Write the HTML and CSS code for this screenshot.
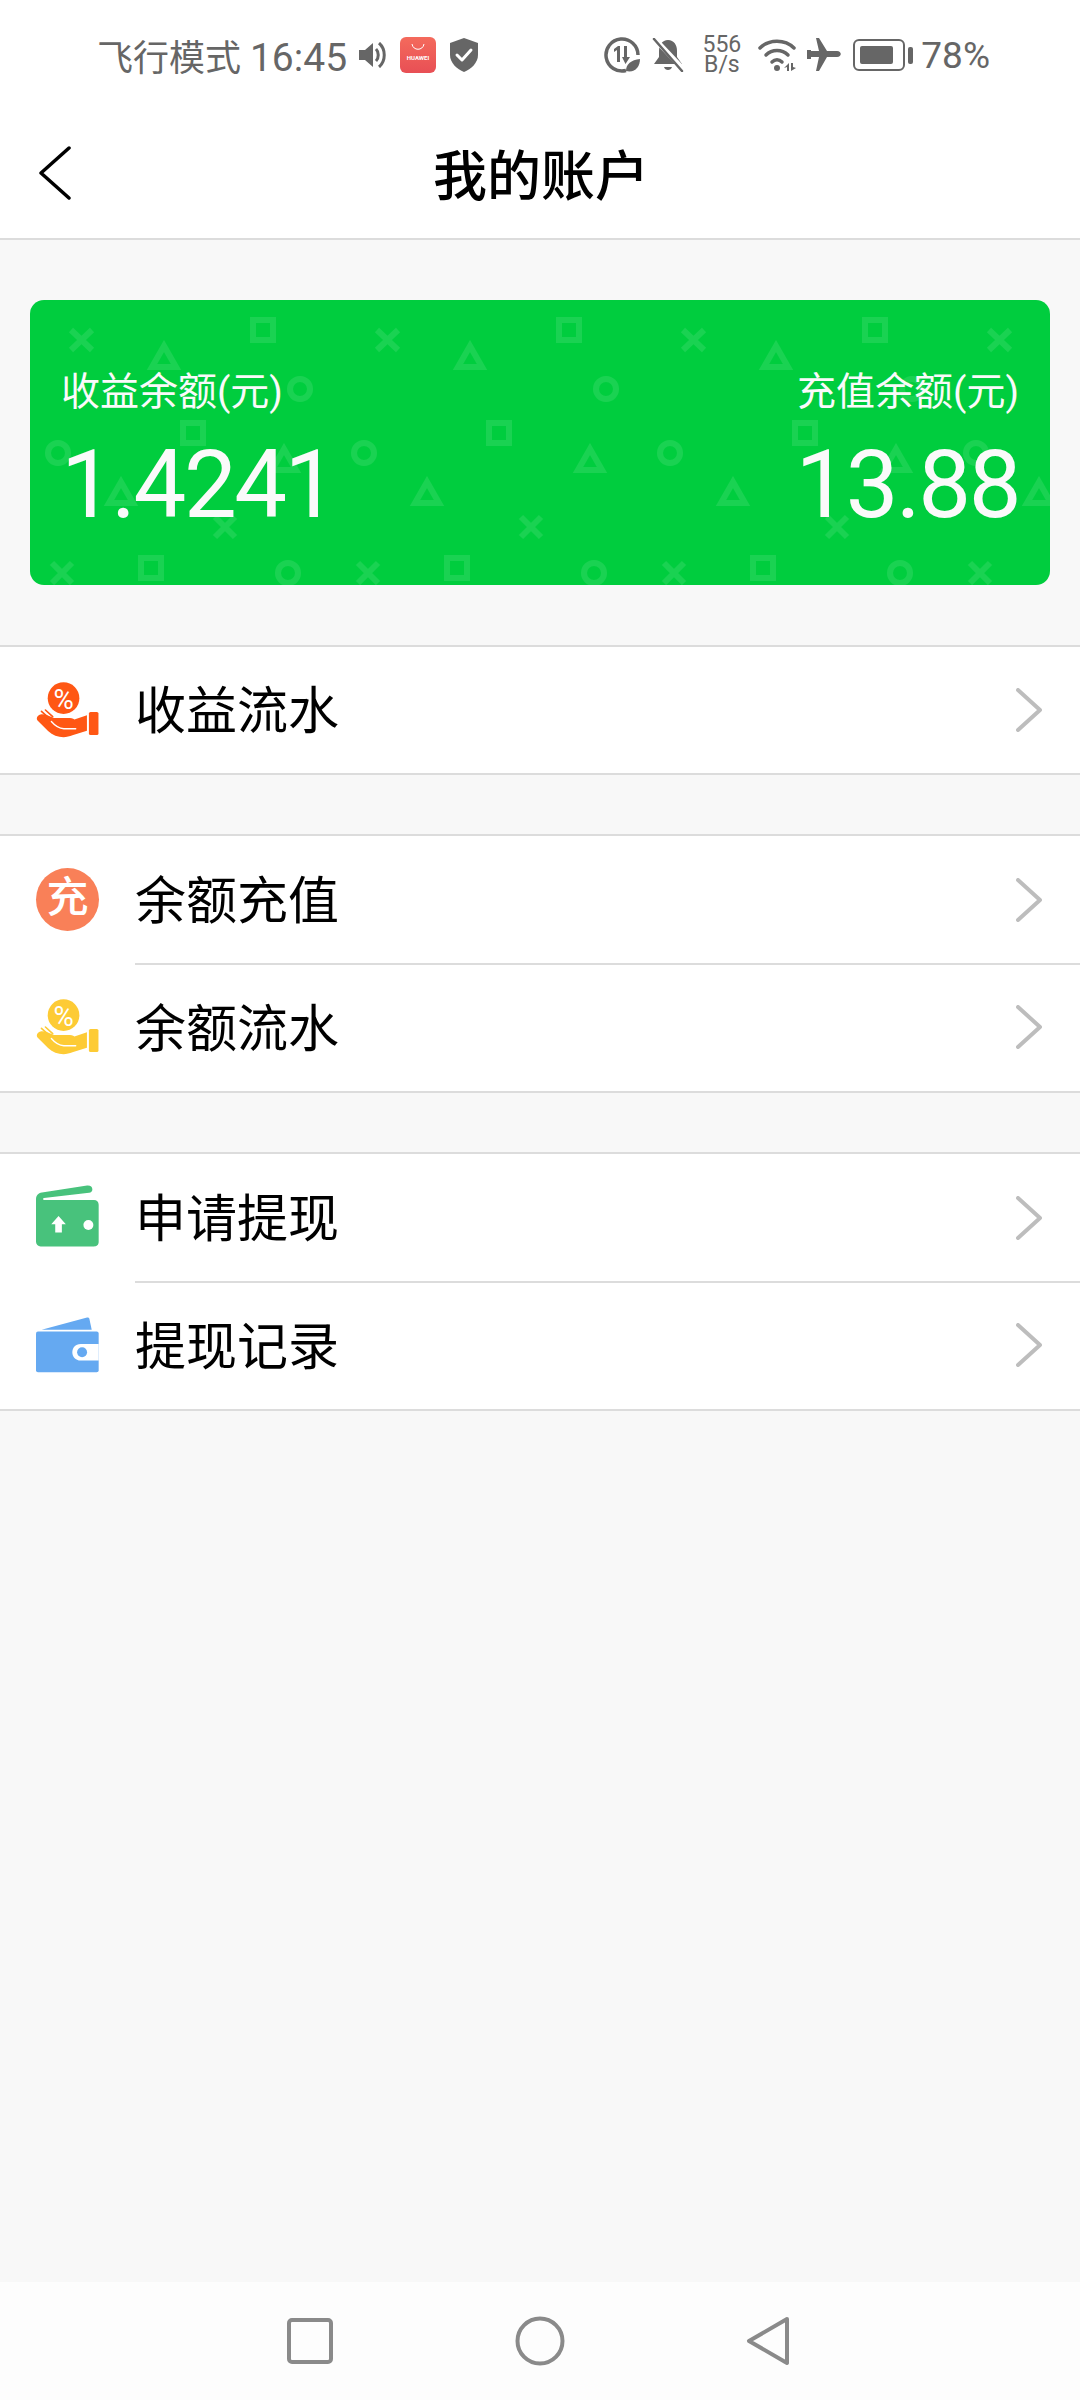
FILE: index.html
```html
<!DOCTYPE html>
<html lang="zh-CN">
<head>
    <meta charset="UTF-8">
    <meta name="viewport" content="width=device-width, initial-scale=1.0">
    <title>我的账户</title>
    <link rel="stylesheet" href="styles.css">
</head>
<body>
    <!-- 共用图标 -->
    <svg class="defs" width="0" height="0">
        <defs>
            <g id="icon-hand">
                <circle cx="191" cy="172" r="48" fill="currentColor"/>
                <rect x="268" y="214" width="29" height="70" rx="5" fill="currentColor"/>
                <path fill="currentColor" d="M124 221C113 223 106 232 112 240L144 272C165 292 195 295 218 285L262 271V224L224 237C220 232 212 232 205 232H162L136 222Z"/>
                <path fill="none" stroke="#fff" stroke-width="4" stroke-linecap="round" d="M154 243C165 256 176 264 192 265H228"/>
                <path fill="none" stroke="currentColor" stroke-width="5" stroke-linecap="round" d="M124 212L146 232M136 208L158 228"/>
            </g>
            <path id="icon-chevron" fill="none" stroke="#bdbdbd" stroke-width="4" stroke-linecap="round" stroke-linejoin="round" d="M2 2L24 22L2 42"/>
        </defs>
    </svg>

    <div class="status-bar">
        <div class="status-left">
            <span class="status-text">飞行模式 <span class="status-time">16:45</span></span>
            <svg class="st-speaker" width="28" height="26" viewBox="0 0 28 26">
                <path fill="#666" d="M0 8H6L14 1V25L6 18H0Z"/>
                <path fill="none" stroke="#666" stroke-width="3" d="M17 7C20 10 20 16 17 19M20 1C27 7 27 19 20 25"/>
            </svg>
            <div class="st-huawei">
                <svg width="14" height="6" viewBox="0 0 14 6"><path fill="none" stroke="#fff" stroke-width="1" d="M1 0C2 7 12 7 13 0"/></svg>
                <span>HUAWEI</span>
            </div>
            <svg class="st-shield" width="28" height="34" viewBox="0 0 28 34">
                <path fill="#666" d="M14 0L28 5V17C28 25 21 31 14 34C7 31 0 25 0 17V5Z"/>
                <path fill="none" stroke="#fff" stroke-width="3" stroke-linecap="round" stroke-linejoin="round" d="M7 17L12 22L21 12"/>
            </svg>
        </div>
        <div class="status-right">
            <svg class="st-data" width="36" height="36" viewBox="0 0 36 36">
                <path fill="none" stroke="#666" stroke-width="3.5" d="M22 33.500A16 16 0 1 1 34 18"/>
                <path fill="#666" d="M10 12L14 9H16V25H13V13L10 15ZM20 9H23V20H26L21.500 27L18 20H20Z"/>
                <path fill="#666" d="M22 34C22 27 27 23 36 22C36 30 31 36 22 34Z"/>
            </svg>
            <svg class="st-bell" width="32" height="34" viewBox="0 0 32 34">
                <path fill="#666" d="M16 2C22 2 25 7 25 13V19L30 26H2L7 19V13C7 7 10 2 16 2ZM12 29H20C19 33 13 33 12 29Z"/>
                <path fill="none" stroke="#fff" stroke-width="5" d="M0 -2L34 34"/>
                <path fill="none" stroke="#666" stroke-width="2.500" stroke-linecap="round" d="M2 1L30 33"/>
            </svg>
            <div class="st-speed"><span>556</span><span>B/s</span></div>
            <svg class="st-wifi" width="40" height="34" viewBox="0 0 40 34">
                <g fill="none" stroke="#666" stroke-width="3.500" stroke-linecap="round">
                    <path d="M2 10C11 1 27 1 36 10"/>
                    <path d="M8 17C14 11 24 11 30 17"/>
                    <path d="M14 24C17 21 21 21 24 24"/>
                </g>
                <circle cx="19" cy="30" r="3" fill="#666"/>
                <path fill="#666" d="M31 25V33H29V29L26 30ZM33 25H35V29L38 30L33 33Z"/>
            </svg>
            <svg class="st-plane" width="34" height="34" viewBox="0 0 34 34">
                <path fill="#666" d="M9 0H12L20 13H30C35 13 35 19 30 19H20L12 33H9L12 19H4V21H0V12H4V13H12Z"/>
            </svg>
            <div class="st-battery">
                <div class="st-battery-body"><div class="st-battery-fill"></div></div>
                <div class="st-battery-nub"></div>
            </div>
            <span class="status-text status-percent">78%</span>
        </div>
    </div>

    <div class="toolbar">
        <svg class="back" width="32" height="54" viewBox="0 0 32 54">
            <path fill="none" stroke="#000" stroke-width="3.500" stroke-linecap="round" stroke-linejoin="round" d="M30 2L2 27L30 52"/>
        </svg>
        <h1>我的账户</h1>
    </div>

    <div class="main">
        <div class="balance-card">
            <svg class="card-pattern" width="1020" height="285">
                <defs>
                    <pattern id="shapes" width="306" height="285" patternUnits="userSpaceOnUse">
                        <g fill="none" stroke="#fff" stroke-opacity="0.1" stroke-width="6">
                            <path d="M41 30L62 50M62 30L41 50"/>
                            <path d="M134 46L146 67H122Z"/>
                            <rect x="223" y="20" width="20" height="20"/>
                            <circle cx="270" cy="89" r="10"/>
                            <rect x="153" y="123" width="20" height="20"/>
                            <circle cx="28" cy="153" r="10"/>
                            <path d="M254 149L266 170H242Z"/>
                            <path d="M91 182L103 203H79Z"/>
                            <path d="M185 217L205 237M205 217L185 237"/>
                            <path d="M22 263L42 283M42 263L22 283"/>
                            <rect x="111" y="258" width="20" height="20"/>
                            <circle cx="258" cy="273" r="10"/>
                        </g>
                    </pattern>
                </defs>
                <rect width="1020" height="285" fill="url(#shapes)"/>
            </svg>
            <div class="balance">
                <span class="balance-label">收益余额(元)</span>
                <span class="balance-value">1.4241</span>
            </div>
            <div class="balance balance-right">
                <span class="balance-label">充值余额(元)</span>
                <span class="balance-value">13.88</span>
            </div>
        </div>

        <ul class="menu">
            <li class="menu-row">
                <svg class="menu-icon icon-orange" width="63" height="56" viewBox="108 123 190 170">
                    <use href="#icon-hand"/>
                    <text x="191" y="204" text-anchor="middle" class="percent">%</text>
                </svg>
                <span class="menu-label">收益流水</span>
                <svg class="chevron" width="26" height="44"><use href="#icon-chevron"/></svg>
            </li>
        </ul>

        <ul class="menu">
            <li class="menu-row">
                <div class="menu-icon icon-charge">充</div>
                <span class="menu-label">余额充值</span>
                <svg class="chevron" width="26" height="44"><use href="#icon-chevron"/></svg>
            </li>
            <li class="menu-row">
                <svg class="menu-icon icon-yellow" width="63" height="56" viewBox="108 123 190 170">
                    <use href="#icon-hand"/>
                    <text x="191" y="204" text-anchor="middle" class="percent">%</text>
                </svg>
                <span class="menu-label">余额流水</span>
                <svg class="chevron" width="26" height="44"><use href="#icon-chevron"/></svg>
            </li>
        </ul>

        <ul class="menu">
            <li class="menu-row">
                <svg class="menu-icon icon-wallet" width="63" height="62" viewBox="108 165 190 186">
                    <path fill="#48c27c" d="M122 210H283C291 210 297 216 297 224V336C297 346 291 350 283 350H122C114 350 108 344 108 336V208C108 196 114 189 126 187L262 166C272 165 278 170 278 178C278 184 274 187 268 188L132 204C128 205 128 209 132 210Z"/>
                    <path fill="#fff" d="M176 258L198 283H186V308H166V283H154Z"/>
                    <circle cx="266" cy="285" r="15" fill="#fff"/>
                </svg>
                <span class="menu-label">申请提现</span>
                <svg class="chevron" width="26" height="44"><use href="#icon-chevron"/></svg>
            </li>
            <li class="menu-row">
                <svg class="menu-icon" width="63" height="56" viewBox="108 563 190 166">
                    <path fill="#65a9f1" d="M125 600L262 563C266 562 268 564 269 567L276 600Z"/>
                    <rect x="108" y="605" width="189" height="123" rx="6" fill="#65a9f1"/>
                    <path fill="#fff" d="M243 643H297V693H243C209 693 209 643 243 643Z"/>
                    <circle cx="247" cy="668" r="15" fill="#65a9f1"/>
                </svg>
                <span class="menu-label">提现记录</span>
                <svg class="chevron" width="26" height="44"><use href="#icon-chevron"/></svg>
            </li>
        </ul>
    </div>

    <div class="nav-bar">
        <svg width="46" height="46" viewBox="0 0 46 46">
            <rect x="2" y="2" width="42" height="42" rx="3" fill="none" stroke="#8a8a8a" stroke-width="4"/>
        </svg>
        <svg width="50" height="50" viewBox="0 0 50 50">
            <circle cx="25" cy="25" r="22.500" fill="none" stroke="#8a8a8a" stroke-width="4"/>
        </svg>
        <svg width="44" height="50" viewBox="0 0 44 50">
            <path d="M41 3L3 25L41 47Z" fill="none" stroke="#8a8a8a" stroke-width="4" stroke-linejoin="round"/>
        </svg>
    </div>
</body>
</html>
```
FILE: styles.css
```css
* {
    margin: 0;
    padding: 0;
    box-sizing: border-box;
}

body {
    width: 1080px;
    height: 2400px;
    display: flex;
    flex-direction: column;
    background-color: #f8f8f8;
    font-family: Roboto, 'Noto Sans CJK SC', sans-serif;
    overflow: hidden;
}

.defs {
    position: absolute;
}

.percent {
    font-family: Roboto, sans-serif;
    font-size: 84px;
    fill: #fff;
}

/* 状态栏 */
.status-bar {
    height: 110px;
    flex-shrink: 0;
    display: flex;
    justify-content: space-between;
    align-items: center;
    padding: 0 90px 0 97px;
    background-color: #fff;
}

.status-left,
.status-right {
    display: flex;
    align-items: center;
}

.status-text {
    font-size: 36px;
    color: #666;
    white-space: nowrap;
}

.status-time {
    font-size: 39px;
}

.status-percent {
    font-size: 37px;
}

.st-speaker {
    margin-left: 12px;
}

.st-huawei {
    width: 36px;
    height: 36px;
    margin-left: 13px;
    border-radius: 6px;
    display: flex;
    flex-direction: column;
    align-items: center;
    padding-top: 7px;
    background: linear-gradient(180deg, #f46a5c, #e84f55);
    color: #fff;
}

.st-huawei span {
    font-size: 6px;
    font-weight: 700;
    margin-top: 4px;
    line-height: 8px;
}

.st-shield {
    margin-left: 14px;
}

.st-bell {
    margin-left: 12px;
}

.st-speed {
    margin-left: 19px;
    display: flex;
    flex-direction: column;
    align-items: center;
    font-size: 23px;
    line-height: 20px;
    color: #666;
}

.st-wifi {
    margin-left: 17px;
}

.st-plane {
    margin-left: 9px;
}

.st-battery {
    margin-left: 12px;
    margin-right: 8px;
    display: flex;
    align-items: center;
    gap: 3px;
}

.st-battery-body {
    width: 52px;
    height: 32px;
    padding: 5px;
    border: 2px solid #666;
    border-radius: 6px;
}

.st-battery-fill {
    width: 33px;
    height: 100%;
    border-radius: 2px;
    background-color: #666;
}

.st-battery-nub {
    width: 5px;
    height: 17px;
    border-radius: 2px;
    background-color: #666;
}

/* 标题栏 */
.toolbar {
    height: 130px;
    flex-shrink: 0;
    position: relative;
    display: flex;
    align-items: center;
    justify-content: center;
    padding: 0 0 3px 2px;
    background-color: #fff;
    border-bottom: 2px solid #dcdcdc;
}

.toolbar h1 {
    font-size: 54px;
    font-weight: 500;
    color: #000;
}

.back {
    position: absolute;
    left: 39px;
    top: 36px;
}

/* 余额卡片 */
.main {
    flex: 1;
}

.balance-card {
    position: relative;
    height: 285px;
    margin: 60px 30px;
    padding: 67px 31px 0 31px;
    display: flex;
    justify-content: space-between;
    border-radius: 14px;
    overflow: hidden;
    background-color: #00cd3e;
    color: #fafafa;
}

.card-pattern {
    position: absolute;
    left: 0;
    top: 0;
}

.balance {
    position: relative;
    display: flex;
    flex-direction: column;
}

.balance-right {
    align-items: flex-end;
}

.balance-label {
    font-size: 39px;
    line-height: 50px;
}

.balance-value {
    font-size: 94px;
    line-height: 110px;
    letter-spacing: -2.5px;
    margin-top: 13px;
}

/* 菜单 */
.menu {
    list-style: none;
    margin-top: 59px;
    background-color: #fff;
    border-top: 2px solid #dcdcdc;
    border-bottom: 2px solid #dcdcdc;
}

.balance-card + .menu {
    margin-top: 60px;
}

.menu-row {
    height: 127px;
    position: relative;
    display: flex;
    align-items: center;
    padding: 0 38px 0 36px;
}

.menu-row:only-child {
    height: 126px;
}

.menu-row + .menu-row {
    height: 128px;
}

.menu-row + .menu-row .menu-label {
    padding-top: 6px;
}

.menu-row + .menu-row::before {
    content: '';
    position: absolute;
    left: 135px;
    right: 0;
    top: 0;
    height: 2px;
    background-color: #dcdcdc;
}

.menu-icon {
    width: 63px;
    flex-shrink: 0;
}

.icon-wallet {
    margin-bottom: 4px;
}

.icon-orange {
    color: #ff5714;
}

.icon-yellow {
    color: #fdcb35;
}

.icon-charge {
    height: 63px;
    border-radius: 50%;
    background-color: #f98058;
    color: #fff;
    font-size: 42px;
    font-weight: 500;
    line-height: 60px;
    text-align: center;
}

.menu-label {
    flex: 1;
    margin-left: 36px;
    padding-top: 4px;
    font-size: 51px;
    line-height: 70px;
    color: #000;
}

.chevron {
    flex-shrink: 0;
}

/* 底部导航 */
.nav-bar {
    height: 118px;
    flex-shrink: 0;
    display: flex;
    align-items: center;
    padding: 0 290px 0 287px;
    justify-content: space-between;
    background-color: #fdfdfd;
}
```
